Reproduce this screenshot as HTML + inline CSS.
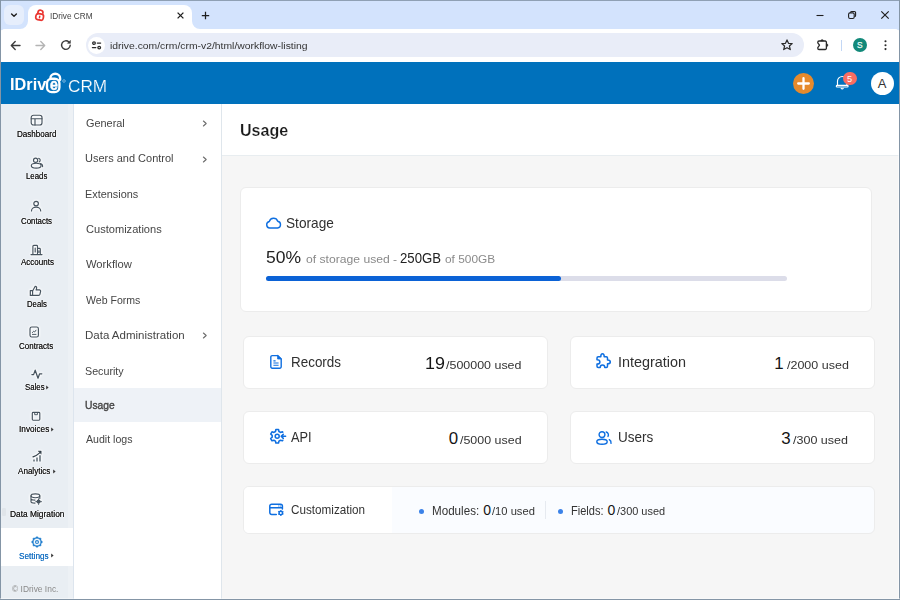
<!DOCTYPE html>
<html>
<head>
<meta charset="utf-8">
<title>IDrive CRM</title>
<style>
*{box-sizing:border-box;margin:0;padding:0}
html,body{width:900px;height:600px;overflow:hidden;background:#f6f6f6;font-family:"Liberation Sans",sans-serif}
.a{position:absolute}
#win{position:absolute;left:0;top:0;width:900px;height:600px;overflow:hidden;background:#f6f6f6}
.t{position:absolute;white-space:nowrap;line-height:1;transform-origin:0 0}
.card{position:absolute;background:#fff;border:1px solid #ececec;border-radius:6px}
svg{position:absolute;overflow:visible}
.si{fill:none;stroke:#46535e;stroke-width:1.15;stroke-linecap:round;stroke-linejoin:round;filter:drop-shadow(0 0 .8px #fff) drop-shadow(0 0 .8px #fff)}
.bi{fill:none;stroke:#0f6fe0;stroke-width:1.4;stroke-linecap:round;stroke-linejoin:round}
</style>
</head>
<body>
<div id="win">
<!-- browser chrome -->
<div class="a" style="left:0;top:0;width:900px;height:30px;background:#d3e3fd"></div>
<div class="a" style="left:4px;top:5px;width:20px;height:20px;border-radius:6px;background:#e6eefc"></div>
<svg style="left:9px;top:10px" width="10" height="10" viewBox="0 0 10 10"><path d="M2.6 3.9 L5 6.2 L7.4 3.9" fill="none" stroke="#1f1f1f" stroke-width="1.4" stroke-linecap="round" stroke-linejoin="round"/></svg>
<div class="a" style="left:28px;top:5px;width:164px;height:25px;background:#fff;border-radius:8px 8px 0 0"></div>
<svg style="left:20px;top:21px" width="8" height="8" viewBox="0 0 8 8"><path d="M8 0 V8 H0 A8 8 0 0 0 8 0Z" fill="#fff"/></svg>
<svg style="left:192px;top:21px" width="8" height="8" viewBox="0 0 8 8"><path d="M0 0 V8 H8 A8 8 0 0 1 0 0Z" fill="#fff"/></svg>
<svg style="left:34px;top:9px" width="12" height="12" viewBox="0 0 12 12">
 <g transform="rotate(11 6 6)" fill="none" stroke="#ea3530" stroke-linecap="round">
  <path d="M3.5 5.3 V3.7 A2.5 2.5 0 0 1 8.5 3.6" stroke-width="1.7"/>
  <rect x="2.2" y="4.9" width="7.6" height="6.1" rx="2.3" stroke-width="1.7"/>
  <path d="M6 7.2 V8.7" stroke-width="1.5"/>
 </g></svg>
<div class="t" style="left:49.88px;top:10px;line-height:11px;font-size:9.40px;color:#444;font-weight:normal;transform:scaleX(0.8775);">IDrive CRM</div>
<svg style="left:176px;top:11px" width="9" height="9" viewBox="0 0 9 9"><path d="M1.6 1.6 L7.4 7.4 M7.4 1.6 L1.6 7.4" stroke="#1f1f1f" stroke-width="1.3"/></svg>
<svg style="left:200.4px;top:9.6px" width="11" height="11" viewBox="0 0 11 11"><path d="M5.5 1.8 V9.2 M1.8 5.5 H9.2" stroke="#1f1f1f" stroke-width="1.25"/></svg>
<svg style="left:814px;top:9px" width="12" height="12" viewBox="0 0 12 12"><path d="M2.5 6.5 H9.5" stroke="#1f1f1f" stroke-width="1.1"/></svg>
<svg style="left:846px;top:9px" width="12" height="12" viewBox="0 0 12 12"><rect x="2.6" y="3.9" width="5.6" height="5.6" rx="1.4" fill="none" stroke="#1f1f1f" stroke-width="1.1"/><path d="M4.4 3.7 V3.6 A1.2 1.2 0 0 1 5.6 2.5 H8.4 A1.2 1.2 0 0 1 9.6 3.7 V6.5 A1.2 1.2 0 0 1 8.5 7.7" fill="none" stroke="#1f1f1f" stroke-width="1.1"/></svg>
<svg style="left:879px;top:9px" width="12" height="12" viewBox="0 0 12 12"><path d="M2.3 2.3 L9.7 9.7 M9.7 2.3 L2.3 9.7" stroke="#1f1f1f" stroke-width="1.2"/></svg>
<div class="a" style="left:0;top:29px;width:900px;height:33px;background:#fff;border-radius:5px 5px 0 0"></div>
<svg style="left:9px;top:39px" width="13" height="13" viewBox="0 0 13 13"><path d="M11 6.5 H2.4 M6.2 2.6 L2.3 6.5 L6.2 10.4" fill="none" stroke="#3c3c3c" stroke-width="1.4" stroke-linecap="round" stroke-linejoin="round"/></svg>
<svg style="left:34px;top:39px" width="13" height="13" viewBox="0 0 13 13"><path d="M2 6.5 H10.6 M6.8 2.6 L10.7 6.5 L6.8 10.4" fill="none" stroke="#b4b4b4" stroke-width="1.4" stroke-linecap="round" stroke-linejoin="round"/></svg>
<svg style="left:59px;top:38px" width="14" height="14" viewBox="0 0 14 14"><path d="M11.2 7.2 A4.3 4.3 0 1 1 9.9 4" fill="none" stroke="#3c3c3c" stroke-width="1.4" stroke-linecap="round"/><path d="M11.4 2.4 V5.3 H8.5 Z" fill="#3c3c3c" stroke="#3c3c3c" stroke-width="0.6" stroke-linejoin="round"/></svg>
<div class="a" style="left:85.5px;top:33.4px;width:718.5px;height:23.6px;border-radius:12px;background:#e9edf8"></div>
<div class="a" style="left:88px;top:36.9px;width:16.8px;height:16.8px;border-radius:50%;background:#fff"></div>
<svg style="left:91px;top:40px" width="12" height="11" viewBox="0 0 12 11"><g fill="none" stroke="#2a2a2a" stroke-width="1.25" stroke-linecap="round"><circle cx="3" cy="3.1" r="1.35"/><path d="M6.3 3.1 H9.6"/><path d="M1.4 7.6 H4.8"/><circle cx="8.2" cy="7.6" r="1.35"/></g></svg>
<div class="t" style="left:110.26px;top:40px;line-height:11px;font-size:9.60px;color:#333;font-weight:normal;transform:scaleX(1.0804);">idrive.com/crm/crm-v2/html/workflow-listing</div>
<svg style="left:780px;top:38px" width="14" height="14" viewBox="0 0 14 14"><path d="M7 1.9 L8.5 5.3 L12.2 5.6 L9.4 8 L10.3 11.6 L7 9.7 L3.7 11.6 L4.6 8 L1.8 5.6 L5.5 5.3 Z" fill="none" stroke="#2a2a2a" stroke-width="1.2" stroke-linejoin="round"/></svg>
<svg style="left:815px;top:38px" width="16" height="14" viewBox="0 0 16 14"><path d="M4 3 H10.2 A1.2 1.2 0 0 1 11.4 4.2 V10.300 A1.2 1.2 0 0 1 10.2 11.5 H4 A1.2 1.2 0 0 1 2.8 10.300 V9.600 L4.500 7.200 L2.800 4.800 V4.200 A1.2 1.2 0 0 1 4 3 Z" fill="none" stroke="#2a2a2a" stroke-width="1.3" stroke-linejoin="round"/><path d="M5.700 3 A1.400 1.500 0 0 1 8.500 3 Z M11.400 5.800 A1.600 1.400 0 0 1 11.400 8.600 Z" fill="#2a2a2a" stroke="#2a2a2a" stroke-width="0.400"/></svg>
<div class="a" style="left:840.6px;top:40px;width:1.2px;height:11px;background:#c3d7f5"></div>
<div class="a" style="left:852.8px;top:38px;width:14.4px;height:14.4px;border-radius:50%;background:#12897a"></div>
<div class="t" style="left:857.02px;top:40px;line-height:10px;font-size:8.40px;color:#e9fbf7;font-weight:normal;-webkit-text-stroke:.25px #e9fbf7;">S</div>
<svg style="left:882px;top:38px" width="6" height="14" viewBox="0 0 6 14"><g fill="#2a2a2a"><circle cx="3.5" cy="3.3" r="1.05"/><circle cx="3.5" cy="7.2" r="1.05"/><circle cx="3.5" cy="11.1" r="1.05"/></g></svg>
<!-- app header -->
<div class="a" style="left:0;top:62.3px;width:900px;height:41.7px;background:#0071bc"></div>
<div class="t" style="left:9.74px;top:74px;line-height:20px;font-size:17.40px;color:#fff;font-weight:bold;transform:scaleX(0.9370);">IDriv</div>
<svg style="left:44px;top:70px" width="20" height="26" viewBox="0 0 20 26">
 <g fill="none" stroke="#fff">
  <path d="M6.4 8.8 V8.2 A4.85 4.5 0 0 1 16.1 8.2 V9.8" stroke-width="2.4" stroke-linecap="round"/>
  <rect x="3" y="8.7" width="12.4" height="13.4" rx="4.6" stroke-width="2.35"/>
 </g></svg>
<div class="t" style="left:49.71px;top:74px;line-height:20px;font-size:17.20px;color:#fff;font-weight:bold;transform:scaleX(0.8210);-webkit-text-stroke:.55px #fff;">e</div>
<svg style="left:62.4px;top:78.9px" width="4" height="4" viewBox="0 0 4 4"><circle cx="2" cy="2" r="1.3" fill="none" stroke="#9fcbea" stroke-width="0.7"/></svg>
<div class="t" style="left:67.91px;top:78px;line-height:17px;font-size:15.70px;color:#fff;font-weight:normal;transform:scaleX(1.0936);-webkit-text-stroke:.18px #0071bc;">CRM</div>
<div class="a" style="left:792.9px;top:73.2px;width:21.2px;height:21.2px;border-radius:50%;background:#e58a2d"></div>
<svg style="left:796px;top:76.3px" width="15" height="15" viewBox="0 0 15 15"><path d="M7.5 2.2 V12.8 M2.2 7.5 H12.8" stroke="#fff" stroke-width="2.3" stroke-linecap="round"/></svg>
<svg style="left:835px;top:75px" width="15" height="16" viewBox="0 0 15 16"><g fill="none" stroke="#fff" stroke-width="1.15" stroke-linecap="round" stroke-linejoin="round"><path d="M2.5 10.3 V6.2 A4.7 4.7 0 0 1 11.9 6.2 V10.3"/><rect x="1.3" y="10.3" width="11.8" height="1.7" rx="0.85"/><path d="M6.2 13.4 A1.2 1.2 0 0 0 8.2 13.4"/></g></svg>
<div class="a" style="left:843px;top:71.7px;width:13.6px;height:13.6px;border-radius:50%;background:#f96d62"></div>
<div class="t" style="left:846.96px;top:74px;line-height:10px;font-size:9.20px;color:#fff;font-weight:normal;">5</div>
<div class="a" style="left:870.8px;top:71.9px;width:22.8px;height:22.8px;border-radius:50%;background:#fff"></div>
<div class="t" style="left:877.78px;top:76px;line-height:15px;font-size:13.00px;color:#333;font-weight:normal;">A</div>
<!-- main -->
<div class="a" style="left:222px;top:104px;width:678px;height:52px;background:#fff;border-bottom:1px solid #e8edf0"></div>
<div class="t" style="left:239.88px;top:120px;line-height:20px;font-size:17.40px;color:#1a1a1a;font-weight:bold;transform:scaleX(0.9227);-webkit-text-stroke:.22px #fff;">Usage</div>
<!-- storage card -->
<div class="card" style="left:240px;top:187px;width:632px;height:125px"></div>
<svg class="bi" style="left:265px;top:216px" width="18" height="14" viewBox="0 0 18 14"><path d="M4.6 12 A3.3 3.3 0 0 1 4.3 5.5 A4.4 4.4 0 0 1 12.7 5.2 A3.45 3.45 0 0 1 12.6 12 Z"/></svg>
<div class="t" style="left:285.52px;top:215px;line-height:16px;font-size:14.30px;color:#303030;font-weight:normal;transform:scaleX(0.9555);">Storage</div><div class="t" style="left:265.67px;top:248px;line-height:19px;font-size:17.00px;color:#222;font-weight:normal;transform:scaleX(1.0305);">50%</div><div class="t" style="left:305.54px;top:252px;line-height:13px;font-size:11.60px;color:#8a8a8a;font-weight:normal;transform:scaleX(1.0478);">of storage used -</div><div class="t" style="left:400.34px;top:250px;line-height:16px;font-size:14.00px;color:#222;font-weight:normal;transform:scaleX(0.9410);">250GB</div><div class="t" style="left:444.62px;top:253px;line-height:12px;font-size:11.20px;color:#8a8a8a;font-weight:normal;transform:scaleX(1.0606);">of 500GB</div>
<div class="a" style="left:266px;top:276px;width:521px;height:5px;border-radius:3px;background:#dcdde9"></div>
<div class="a" style="left:266px;top:276px;width:295px;height:5px;border-radius:3px;background:#0b62d6"></div>

<!-- records -->
<div class="card" style="left:243px;top:336px;width:305px;height:53px"></div>
<svg class="bi" style="left:269px;top:353.5px" width="14" height="16" viewBox="0 0 14 16"><path d="M3 1.6 H8.6 L12.2 5 V12.8 A1.4 1.4 0 0 1 10.8 14.2 H3.2 A1.4 1.4 0 0 1 1.8 12.8 V3 A1.4 1.4 0 0 1 3.2 1.6 Z" stroke-width="1.4"/><path d="M8.6 1.6 V5 H12.2Z" fill="#0f6fe0" stroke-width="0.8"/><path d="M4.4 6.8 H6.6 M4.4 9 H9.6 M4.4 11.2 H9.6" stroke-width="1.15" stroke-linecap="butt"/></svg>
<div class="t" style="left:291.23px;top:354px;line-height:16px;font-size:14.50px;color:#303030;font-weight:normal;transform:scaleX(0.9264);">Records</div><div class="t" style="left:424.71px;top:354px;line-height:19px;font-size:16.90px;color:#151515;font-weight:normal;transform:scaleX(1.0607);">19</div><div class="t" style="left:446.21px;top:359px;line-height:12px;font-size:11.00px;color:#333;font-weight:normal;transform:scaleX(1.1317);">/500000 used</div>
<!-- integration -->
<div class="card" style="left:570px;top:336px;width:305px;height:53px"></div>
<svg class="bi" style="left:595px;top:352px" width="17" height="18" viewBox="0 0 17 18"><path d="M3.2 4.7 H5.8 A1.7 2.9 0 0 1 9.2 4.7 H11.3 Q12.5 4.7 12.5 5.9 V8 A2.8 1.9 0 0 1 12.5 11.8 V14.3 Q12.5 15.5 11.3 15.5 H9.8 A2.3 2.6 0 0 0 5.2 15.5 H3.2 Q2 15.5 2 14.3 V12.1 A2.9 2.2 0 0 0 2 7.7 V5.9 Q2 4.7 3.2 4.7 Z" stroke-width="1.5"/></svg>
<div class="t" style="left:617.92px;top:354px;line-height:16px;font-size:14.50px;color:#303030;font-weight:normal;transform:scaleX(0.9923);">Integration</div><div class="t" style="left:774.21px;top:354px;line-height:19px;font-size:16.90px;color:#151515;font-weight:normal;">1</div><div class="t" style="left:786.62px;top:359px;line-height:12px;font-size:11.00px;color:#333;font-weight:normal;transform:scaleX(1.1358);">/2000 used</div>
<!-- api -->
<div class="card" style="left:243px;top:411px;width:305px;height:53px"></div>
<svg class="bi" style="left:269px;top:428.2px" width="18" height="17" viewBox="0 0 18 17"><path d="M13.78 4.24 L13.41 3.77 L11.48 4.39 L9.94 3.51 L9.52 1.53 L6.88 1.53 L6.46 3.51 L4.92 4.39 L2.99 3.77 L1.68 6.05 L3.18 7.41 L3.18 9.19 L1.68 10.55 L2.99 12.83 L4.92 12.21 L6.46 13.09 L6.88 15.07 L9.52 15.07 L9.94 13.09 L11.48 12.21 L13.41 12.83 L13.78 12.36" stroke-width="1.55"/><circle cx="8.2" cy="8.3" r="2" stroke-width="1.5"/><path d="M16.6 8.3 H12.3 M14.3 6.2 L12.2 8.3 L14.3 10.4" stroke-width="1.5"/></svg>
<div class="t" style="left:291.41px;top:429px;line-height:16px;font-size:14.50px;color:#303030;font-weight:normal;transform:scaleX(0.8812);">API</div><div class="t" style="left:448.78px;top:429px;line-height:19px;font-size:16.90px;color:#151515;font-weight:normal;">0</div><div class="t" style="left:459.91px;top:434px;line-height:12px;font-size:11.00px;color:#333;font-weight:normal;transform:scaleX(1.1306);">/5000 used</div>
<!-- users -->
<div class="card" style="left:570px;top:411px;width:305px;height:53px"></div>
<svg class="bi" style="left:595px;top:429.5px" width="18" height="16" viewBox="0 0 18 16"><circle cx="7" cy="4.600" r="2.9" stroke-width="1.4"/><ellipse cx="7" cy="11.800" rx="5.200" ry="2.500" stroke-width="1.4"/><path d="M11.200 2 A3 3 0 0 1 13 6.400 M14.300 9.700 A3.600 3.600 0 0 1 16 13.400" stroke-width="1.4"/></svg>
<div class="t" style="left:618.16px;top:429px;line-height:16px;font-size:14.50px;color:#303030;font-weight:normal;transform:scaleX(0.9313);">Users</div><div class="t" style="left:781.14px;top:429px;line-height:19px;font-size:16.90px;color:#151515;font-weight:normal;">3</div><div class="t" style="left:793.37px;top:434px;line-height:12px;font-size:11.00px;color:#333;font-weight:normal;transform:scaleX(1.1382);">/300 used</div>
<!-- customization -->
<div class="card" style="left:243px;top:486px;width:632px;height:48px;background:#fafcff"></div>
<div class="a" style="left:244px;top:487px;width:147.5px;height:46px;background:#fff;border-radius:5px 0 0 5px"></div>
<svg class="bi" style="left:268.2px;top:502.1px" width="17" height="15" viewBox="0 0 17 15"><path d="M8.3 12.4 H3.6 A1.8 1.8 0 0 1 1.8 10.6 V4 A1.8 1.8 0 0 1 3.6 2.2 H12.6 A1.8 1.8 0 0 1 14.4 4 V7.1 M1.8 5.7 H14.4" stroke-width="1.5"/><path d="M10.6 4 H11 M12.3 4 H12.7" stroke-width="0.9"/><circle cx="12.8" cy="10.9" r="1.75" stroke-width="1.45"/><path d="M14.62 11.95 L15.35 12.38 M12.80 13.00 L12.80 13.85 M10.98 11.95 L10.25 12.38 M10.98 9.85 L10.25 9.43 M12.80 8.80 L12.80 7.95 M14.62 9.85 L15.35 9.42" stroke-width="1.5" stroke-linecap="butt"/></svg>
<div class="t" style="left:291.27px;top:503px;line-height:14px;font-size:11.90px;color:#333;font-weight:normal;transform:scaleX(0.9838);">Customization</div>
<div class="a" style="left:418.6px;top:508.9px;width:5px;height:5px;border-radius:50%;background:#3b82e8"></div>
<div class="t" style="left:431.52px;top:504px;line-height:14px;font-size:11.90px;color:#333;font-weight:normal;transform:scaleX(0.9776);">Modules:</div><div class="t" style="left:483.14px;top:502px;line-height:16px;font-size:14.00px;color:#151515;font-weight:normal;">0</div><div class="t" style="left:492.08px;top:506px;line-height:11px;font-size:10.30px;color:#333;font-weight:normal;transform:scaleX(1.0852);">/10 used</div>
<div class="a" style="left:545px;top:501px;width:1px;height:18px;background:#e6eaf0"></div>
<div class="a" style="left:558.3px;top:508.9px;width:5px;height:5px;border-radius:50%;background:#3b82e8"></div>
<div class="t" style="left:571.07px;top:504px;line-height:14px;font-size:11.90px;color:#333;font-weight:normal;transform:scaleX(0.9273);">Fields:</div><div class="t" style="left:607.44px;top:502px;line-height:16px;font-size:14.00px;color:#151515;font-weight:normal;">0</div><div class="t" style="left:617.08px;top:506px;line-height:11px;font-size:10.30px;color:#333;font-weight:normal;transform:scaleX(1.0638);">/300 used</div><!-- sidebar -->
<div class="a" style="left:0;top:104px;width:73px;height:496px;background:#e9eef3"></div>
<div class="a" style="left:68px;top:104px;width:5px;height:496px;background:#edf1f5"></div>
<div class="a" style="left:73px;top:104px;width:1px;height:496px;background:#dde5ee"></div>
<div class="a" style="left:1px;top:528px;width:72px;height:37.7px;background:#fff"></div>
<div class="a" style="left:2px;top:508px;width:3.5px;height:8px;border-radius:1px;background:rgba(60,70,80,.05)"></div>
<!-- dashboard -->
<svg class="si" style="left:30px;top:113.5px" width="13" height="12" viewBox="0 0 13 12"><rect x="1.2" y="1.2" width="10.8" height="9.8" rx="2.3"/><path d="M1.2 4.7 H12 M5 4.7 V11"/></svg>
<div class="t" style="left:16.87px;top:129px;line-height:10px;font-size:8.90px;color:#242424;font-weight:normal;transform:scaleX(0.9101);text-shadow:0 0 .18px currentColor,0 0 1.2px #fff,0 0 2px #fff,0 0 2px #fff;">Dashboard</div>
<!-- leads -->
<svg class="si" style="left:30px;top:156.5px" width="14" height="12" viewBox="0 0 14 12"><circle cx="5.6" cy="3.2" r="2.1"/><path d="M8.6 1.3 A2 2 0 0 1 9.2 5"/><ellipse cx="6.2" cy="8.7" rx="4.9" ry="2.4"/><path d="M10.4 6.6 A3 3 0 0 1 12.6 9.6"/></svg>
<div class="t" style="left:25.58px;top:171px;line-height:10px;font-size:8.90px;color:#242424;font-weight:normal;transform:scaleX(0.8814);text-shadow:0 0 .18px currentColor,0 0 1.2px #fff,0 0 2px #fff,0 0 2px #fff;">Leads</div>
<!-- contacts -->
<svg class="si" style="left:30px;top:200px" width="13" height="12" viewBox="0 0 13 12"><circle cx="6.1" cy="3.6" r="2.3"/><path d="M1.5 11 A4.6 3.9 0 0 1 10.7 11"/></svg>
<div class="t" style="left:21.05px;top:216px;line-height:10px;font-size:8.90px;color:#242424;font-weight:normal;transform:scaleX(0.8864);text-shadow:0 0 .18px currentColor,0 0 1.2px #fff,0 0 2px #fff,0 0 2px #fff;">Contacts</div>
<!-- accounts -->
<svg class="si" style="left:30px;top:243.5px" width="13" height="12" viewBox="0 0 13 12"><path d="M1 10.6 H12 M2.9 10.6 V2.2 A0.9 0.9 0 0 1 3.8 1.3 H6.6 A0.9 0.9 0 0 1 7.5 2.2 V10.6 M7.5 4.3 H9.4 A0.9 0.9 0 0 1 10.3 5.2 V10.6 M5.2 4 V8 M8.9 6.8 V8.4" /></svg>
<div class="t" style="left:20.61px;top:257px;line-height:10px;font-size:8.90px;color:#242424;font-weight:normal;transform:scaleX(0.9014);text-shadow:0 0 .18px currentColor,0 0 1.2px #fff,0 0 2px #fff,0 0 2px #fff;">Accounts</div>
<!-- deals -->
<svg class="si" style="left:29px;top:284.5px" width="13" height="12" viewBox="0 0 13 12"><path d="M1.3 5.6 H3.6 V10.4 H1.3 Z M3.6 6 L6.2 1.3 C7.6 1.3 7.9 2.6 7.5 3.6 L7.1 4.9 H10.4 A1.2 1.2 0 0 1 11.6 6.3 L10.9 9.4 A1.3 1.3 0 0 1 9.6 10.4 H3.6"/></svg>
<div class="t" style="left:26.58px;top:299px;line-height:10px;font-size:8.90px;color:#242424;font-weight:normal;transform:scaleX(0.8708);text-shadow:0 0 .18px currentColor,0 0 1.2px #fff,0 0 2px #fff,0 0 2px #fff;">Deals</div>
<!-- contracts -->
<svg class="si" style="left:29.3px;top:326px" width="11" height="12" viewBox="0 0 11 12"><rect x="1" y="1" width="8.4" height="10" rx="1.8"/><path d="M3.4 8.4 H7 M3.4 6.6 L4.7 5.2 L5.6 6 L7 4.2" stroke-width="0.95"/></svg>
<div class="t" style="left:19.34px;top:341px;line-height:10px;font-size:8.90px;color:#242424;font-weight:normal;transform:scaleX(0.9034);text-shadow:0 0 .18px currentColor,0 0 1.2px #fff,0 0 2px #fff,0 0 2px #fff;">Contracts</div>
<!-- sales -->
<svg class="si" style="left:30.5px;top:369px" width="12" height="11" viewBox="0 0 12 11"><path d="M0.9 5.6 H2.6 L4.2 1.2 L7 9.2 L8.6 4.8 H10.8" stroke-width="1.25"/></svg>
<div class="t" style="left:24.60px;top:382px;line-height:10px;font-size:8.90px;color:#242424;font-weight:normal;transform:scaleX(0.8819);text-shadow:0 0 .18px currentColor,0 0 1.2px #fff,0 0 2px #fff,0 0 2px #fff;">Sales</div><svg style="left:46.0px;top:385.0px" width="3" height="5" viewBox="0 0 3 5"><path d="M0.2 0.5 L2.6 2.5 L0.2 4.5Z" fill="#333"/></svg>
<!-- invoices -->
<svg class="si" style="left:31.3px;top:410.6px" width="10" height="11" viewBox="0 0 10 11"><rect x="1.3" y="1.3" width="7.5" height="7.9" rx="0.9"/><path d="M3.7 1.5 V3.7 H6.4 V1.5" stroke-width="0.95"/></svg>
<div class="t" style="left:18.98px;top:424px;line-height:10px;font-size:8.90px;color:#242424;font-weight:normal;transform:scaleX(0.9307);text-shadow:0 0 .18px currentColor,0 0 1.2px #fff,0 0 2px #fff,0 0 2px #fff;">Invoices</div><svg style="left:51.3px;top:426.8px" width="3" height="5" viewBox="0 0 3 5"><path d="M0.2 0.5 L2.6 2.5 L0.2 4.5Z" fill="#333"/></svg>
<!-- analytics -->
<svg class="si" style="left:32px;top:450px" width="11" height="13" viewBox="0 0 11 13"><path d="M2 11.5 V9.4 M5 11.5 V7.4 M8 11.5 V5.3" stroke="#66737d" stroke-width="1.6" stroke-linecap="butt"/><path d="M1 6.9 Q4.8 5.6 8 2.6" stroke="#36424c" stroke-width="1.25"/><path d="M6.500 1.100 H9.200 V3.800 Z" fill="#2f3b45" stroke="#2f3b45" stroke-width="0.5"/></svg>
<div class="t" style="left:18.11px;top:466px;line-height:10px;font-size:8.90px;color:#242424;font-weight:normal;transform:scaleX(0.9100);text-shadow:0 0 .18px currentColor,0 0 1.2px #fff,0 0 2px #fff,0 0 2px #fff;">Analytics</div><svg style="left:52.8px;top:468.6px" width="3" height="5" viewBox="0 0 3 5"><path d="M0.2 0.5 L2.6 2.5 L0.2 4.5Z" fill="#333"/></svg>
<!-- data migration -->
<svg class="si" style="left:30.3px;top:492.8px" width="13" height="13" viewBox="0 0 13 13"><ellipse cx="5.4" cy="2.8" rx="4.4" ry="1.9"/><path d="M1 2.8 V8.7 C1 9.7 3 10.1 5 10.1 M9.8 2.8 V5.4 M1 5.7 C1 6.7 3 7.1 5 7.1"/><circle cx="8.6" cy="8.6" r="1.5" fill="#46535e" stroke-width="1.1"/><path d="M8.6 5.9 V6.5 M8.6 10.7 V11.3 M5.9 8.6 H6.5 M10.7 8.6 H11.3" stroke-width="1.1"/></svg>
<div class="t" style="left:9.75px;top:509px;line-height:10px;font-size:8.90px;color:#242424;font-weight:normal;transform:scaleX(0.9439);text-shadow:0 0 .18px currentColor,0 0 1.2px #fff,0 0 2px #fff,0 0 2px #fff;">Data Migration</div>
<!-- settings (active) -->
<svg style="left:30.5px;top:536.4px" width="12" height="12" viewBox="0 0 12 12"><path d="M5.25 0.65 L6.75 0.65 L7.23 1.57 L8.27 2.00 L9.25 1.69 L10.31 2.75 L10.00 3.73 L10.43 4.77 L11.35 5.25 L11.35 6.75 L10.43 7.23 L10.00 8.27 L10.31 9.25 L9.25 10.31 L8.27 10.00 L7.23 10.43 L6.75 11.35 L5.25 11.35 L4.77 10.43 L3.73 10.00 L2.75 10.31 L1.69 9.25 L2.00 8.27 L1.57 7.23 L0.65 6.75 L0.65 5.25 L1.57 4.77 L2.00 3.73 L1.69 2.75 L2.75 1.69 L3.73 2.00 L4.77 1.57 Z M2.50 6.00 a3.5 3.5 0 1 0 7.0 0 a3.5 3.5 0 1 0 -7.0 0 Z" fill="#2480cf" fill-rule="evenodd" stroke="#2480cf" stroke-width="0.25" stroke-linejoin="round"/><circle cx="6" cy="6" r="1.45" fill="none" stroke="#2480cf" stroke-width="1.15"/></svg>
<div class="t" style="left:19.38px;top:551px;line-height:10px;font-size:8.90px;color:#1a73c4;font-weight:normal;transform:scaleX(0.9256);text-shadow:0 0 .18px currentColor,0 0 1.2px #fff,0 0 2px #fff,0 0 2px #fff;">Settings</div><svg style="left:51.4px;top:553.3px" width="3" height="5" viewBox="0 0 3 5"><path d="M0.2 0.5 L2.6 2.5 L0.2 4.5Z" fill="#333"/></svg>
<div class="t" style="left:12.22px;top:584px;line-height:10px;font-size:9.00px;color:#8a8a8a;font-weight:normal;transform:scaleX(0.9354);">© IDrive Inc.</div>
<!-- settings menu -->
<div class="a" style="left:74px;top:104px;width:147px;height:496px;background:#fff"></div>
<div class="a" style="left:221px;top:104px;width:1px;height:496px;background:#dfe6ec"></div>
<div class="a" style="left:74px;top:388.3px;width:147px;height:33.7px;background:#eef2f7"></div>
<div class="t" style="left:85.91px;top:116px;line-height:13px;font-size:11.60px;color:#454545;font-weight:normal;transform:scaleX(0.9405);">General</div><svg style="left:201.5px;top:120.2px" width="6" height="7" viewBox="0 0 6 7"><path d="M1.4 1 L4.2 3.5 L1.4 6" fill="none" stroke="#6c6c6c" stroke-width="1.1" stroke-linecap="round" stroke-linejoin="round"/></svg><div class="t" style="left:85.35px;top:151px;line-height:13px;font-size:11.60px;color:#454545;font-weight:normal;transform:scaleX(0.9474);">Users and Control</div><svg style="left:201.5px;top:155.5px" width="6" height="7" viewBox="0 0 6 7"><path d="M1.4 1 L4.2 3.5 L1.4 6" fill="none" stroke="#6c6c6c" stroke-width="1.1" stroke-linecap="round" stroke-linejoin="round"/></svg><div class="t" style="left:85.36px;top:187px;line-height:13px;font-size:11.60px;color:#454545;font-weight:normal;transform:scaleX(0.9383);">Extensions</div><div class="t" style="left:85.89px;top:222px;line-height:13px;font-size:11.60px;color:#454545;font-weight:normal;transform:scaleX(0.9550);">Customizations</div><div class="t" style="left:86.21px;top:257px;line-height:13px;font-size:11.60px;color:#454545;font-weight:normal;transform:scaleX(0.9666);">Workflow</div><div class="t" style="left:86.21px;top:293px;line-height:13px;font-size:11.60px;color:#454545;font-weight:normal;transform:scaleX(0.9105);">Web Forms</div><div class="t" style="left:85.31px;top:328px;line-height:13px;font-size:11.60px;color:#454545;font-weight:normal;transform:scaleX(0.9918);">Data Administration</div><svg style="left:201.5px;top:332.1px" width="6" height="7" viewBox="0 0 6 7"><path d="M1.4 1 L4.2 3.5 L1.4 6" fill="none" stroke="#6c6c6c" stroke-width="1.1" stroke-linecap="round" stroke-linejoin="round"/></svg><div class="t" style="left:85.38px;top:364px;line-height:13px;font-size:11.60px;color:#454545;font-weight:normal;transform:scaleX(0.9228);">Security</div><div class="t" style="left:85.42px;top:398px;line-height:13px;font-size:11.60px;color:#454545;font-weight:normal;transform:scaleX(0.8844);-webkit-text-stroke:.4px #454545;">Usage</div><div class="t" style="left:86.21px;top:432px;line-height:13px;font-size:11.60px;color:#454545;font-weight:normal;transform:scaleX(0.9143);">Audit logs</div><!-- window border -->
<div class="a" style="left:0;top:0;width:900px;height:1px;background:#8fa0b4"></div>
<div class="a" style="left:0;top:0;width:1px;height:600px;background:#8495a6"></div>
<div class="a" style="left:898px;top:155px;width:1px;height:444px;background:rgba(255,255,255,.6)"></div>
<div class="a" style="left:899px;top:0;width:1px;height:600px;background:#8495a6"></div>
<div class="a" style="left:0;top:598px;width:900px;height:1px;background:rgba(255,255,255,.4)"></div>
<div class="a" style="left:0;top:599px;width:900px;height:1px;background:#8495a6"></div>
</div>
</body>
</html>
